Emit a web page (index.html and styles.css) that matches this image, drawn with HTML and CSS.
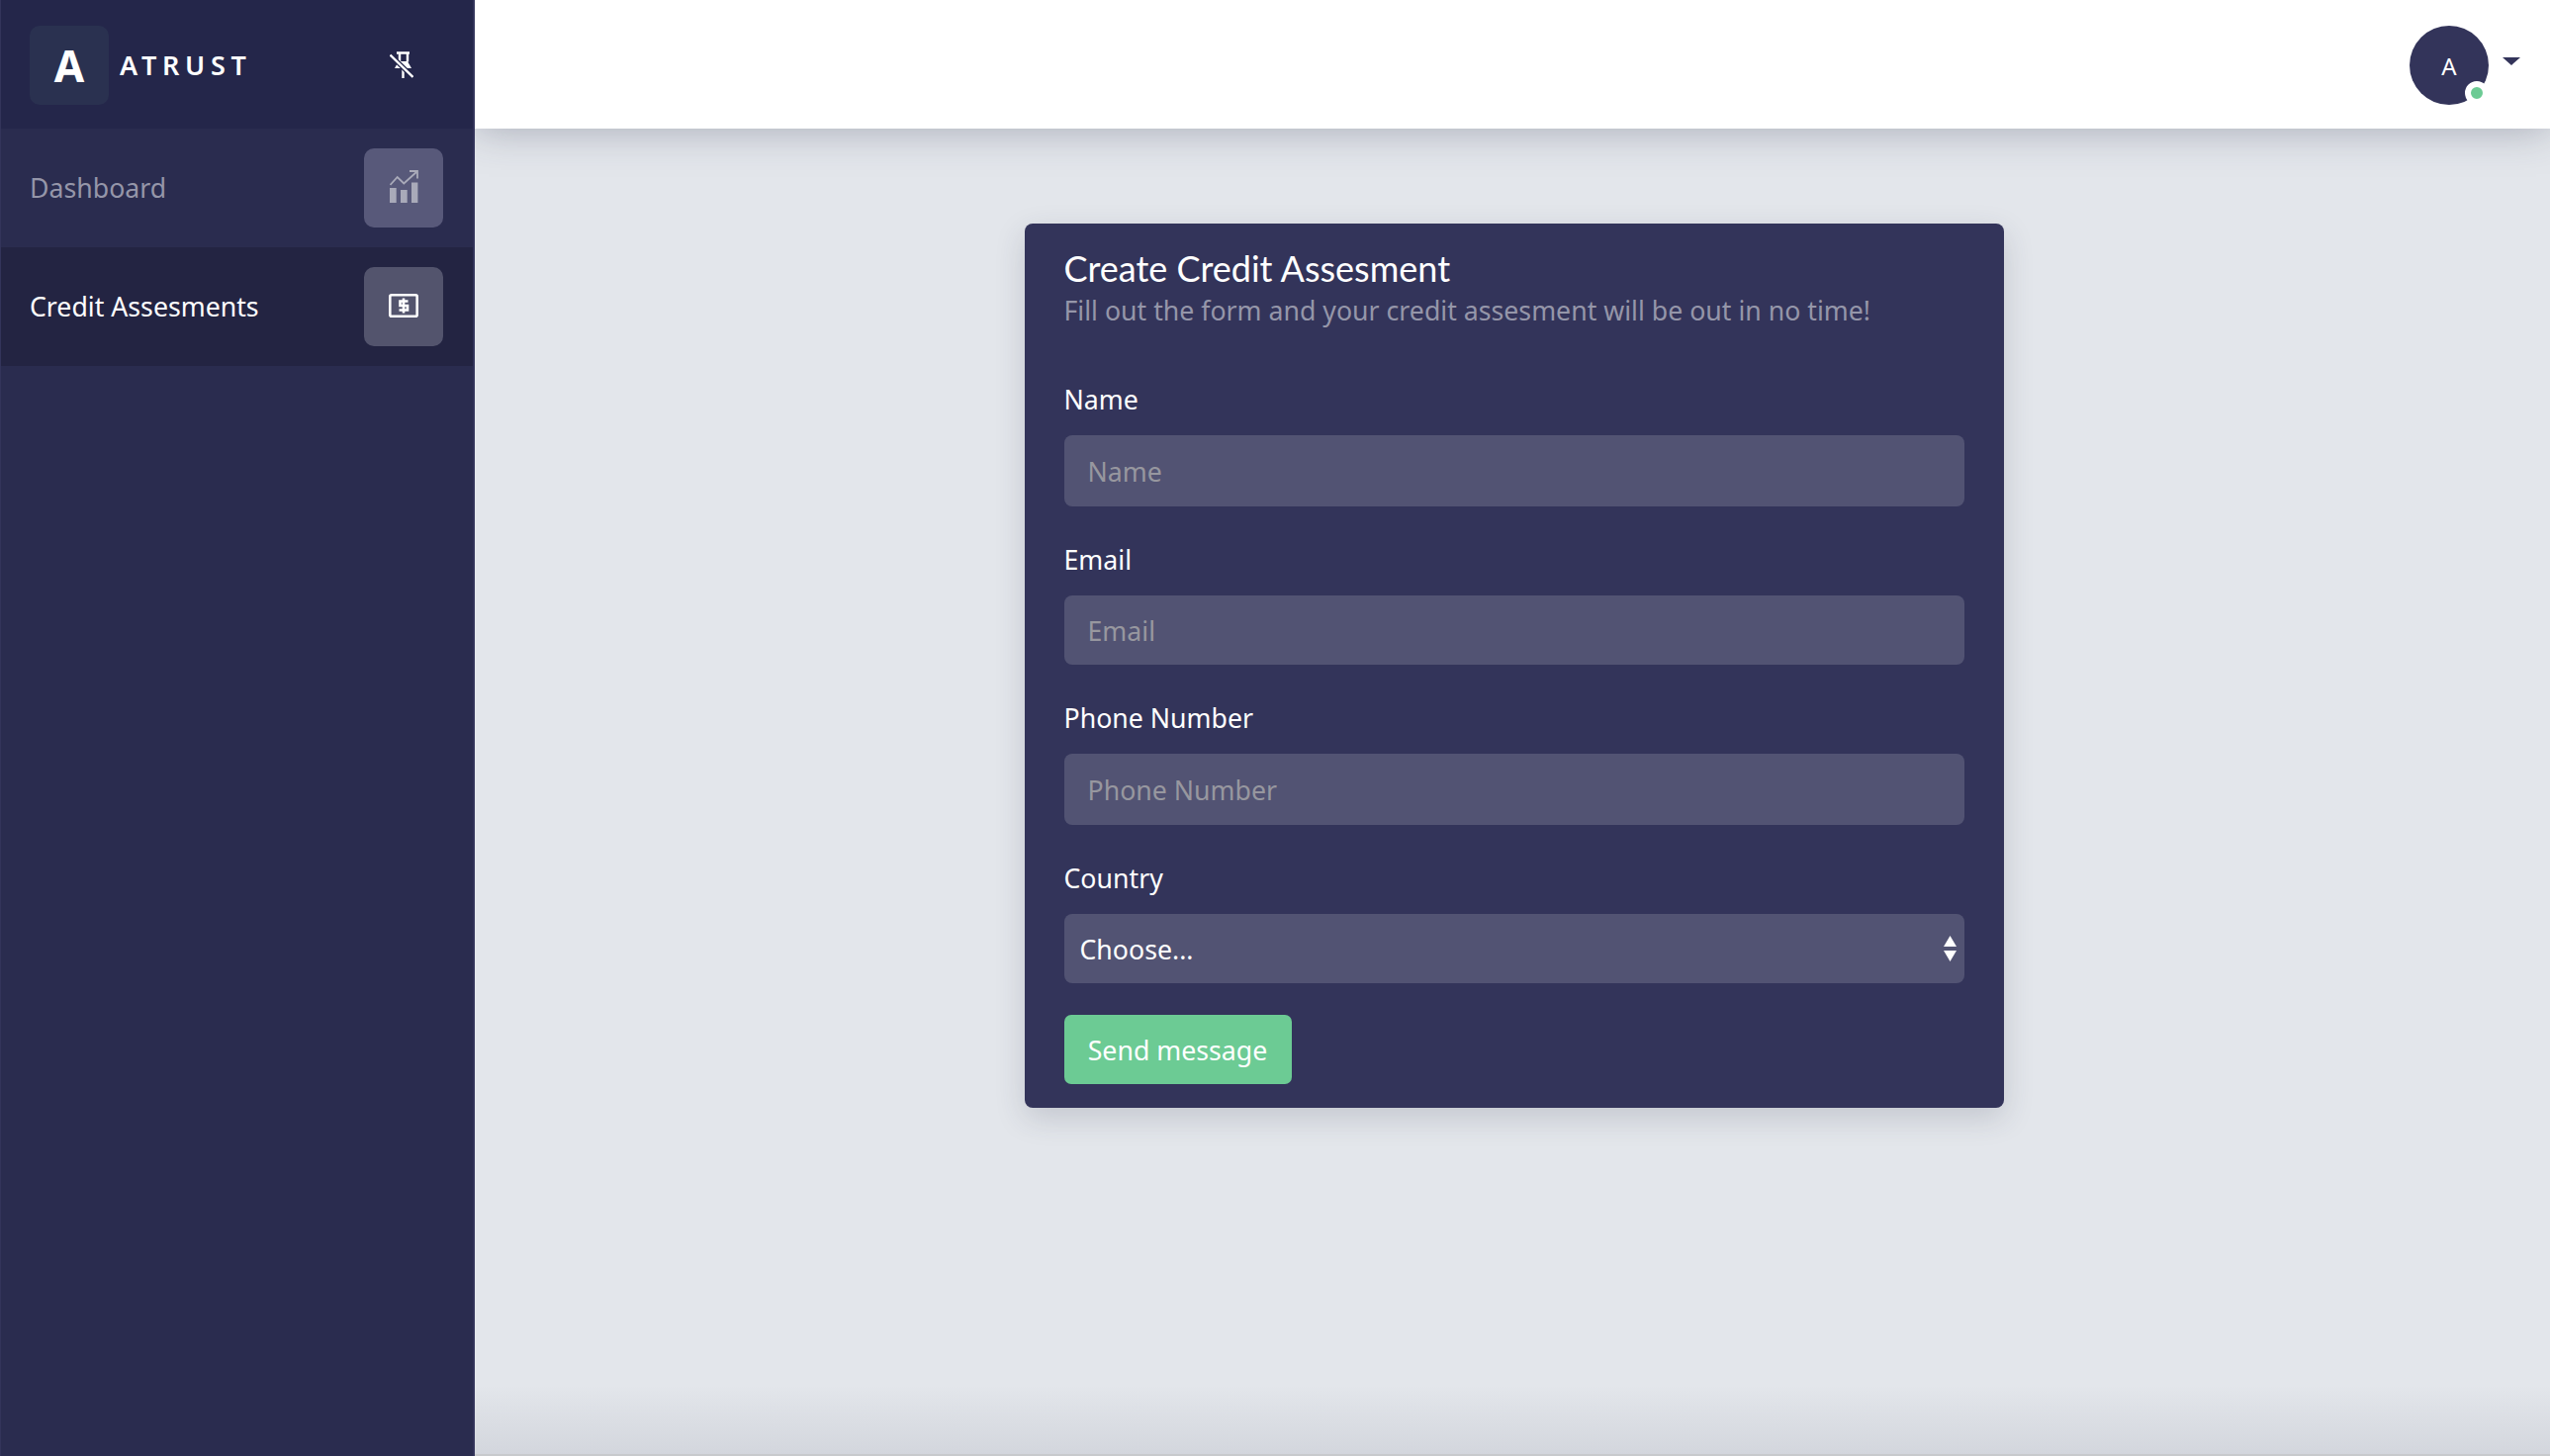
FILE: index.html
```html
<!DOCTYPE html>
<html lang="en">
<head>
<meta charset="utf-8">
<title>Atrust</title>
<link rel="stylesheet" href="styles.css">
</head>
<body>
<aside class="sidebar">
  <div class="brand">
    <div class="logo">A</div>
    <span class="brand-name">ATRUST</span>
    <svg class="pin" viewBox="0 0 24 30" width="24" height="30" aria-hidden="true">
      <path d="M7 3.500h13M10 3.500v9M18 3.500v9" fill="none" stroke="#fff" stroke-width="2.400"/>
      <path d="M13.500 19v10" fill="none" stroke="#fff" stroke-width="2.400"/>
      <path d="M9 12h9l4 7H5z" fill="#fff"/>
      <path d="M0.500 5.500l23 22.500" stroke="#24264a" stroke-width="5"/>
      <path d="M0.500 5.500l23 22.500" stroke="#fff" stroke-width="2.400"/>
    </svg>
  </div>
  <nav class="nav">
    <a class="nav-item">
      <span>Dashboard</span>
      <span class="nav-icon">
        <svg class="icon-raised" viewBox="0 0 29 33" width="29" height="33" aria-hidden="true">
          <path d="M0.500 15L7.700 7l6.600 6.500L27.500 1.500" fill="none" stroke="currentColor" stroke-width="1.800"/>
          <path d="M20 1h8v7.500" fill="none" stroke="currentColor" stroke-width="1.800"/>
          <path d="M0 18h6.700v15H0zM11 20h6.700v13H11zM22 12.500h6.400V33H22z" fill="currentColor"/>
        </svg>
      </span>
    </a>
    <a class="nav-item active">
      <span>Credit Assesments</span>
      <span class="nav-icon">
        <svg class="icon-raised" viewBox="0 0 30 24" width="30" height="24" aria-hidden="true">
          <rect x="1.300" y="1.300" width="27.400" height="21.400" rx="1.500" fill="none" stroke="currentColor" stroke-width="2.600"/>
          <path d="M19.500 7.500h-8V12h7.500v4.500h-8.500M15 4.500v15" fill="none" stroke="currentColor" stroke-width="2.600"/>
        </svg>
      </span>
    </a>
  </nav>
</aside>
<div class="main">
  <header class="topbar">
    <div class="avatar">A<span class="status"></span></div>
    <span class="caret"></span>
  </header>
  <main class="content">
    <form class="card">
      <h1 class="card-title">Create Credit Assesment</h1>
      <p class="card-sub">Fill out the form and your credit assesment will be out in no time!</p>
      <div class="field first">
        <label class="label" for="name">Name</label>
        <input class="control" id="name" placeholder="Name">
      </div>
      <div class="field">
        <label class="label" for="email">Email</label>
        <input class="control short" id="email" placeholder="Email">
      </div>
      <div class="field">
        <label class="label" for="phone">Phone Number</label>
        <input class="control" id="phone" placeholder="Phone Number">
      </div>
      <div class="field">
        <label class="label" for="country">Country</label>
        <div class="select-wrap">
          <select class="control short select" id="country"><option>Choose...</option></select>
          <svg class="select-arrows" viewBox="0 0 13 26" width="13" height="26" aria-hidden="true">
            <path d="M6.500 0L13 11H0zM0 15h13L6.500 26z" fill="#fff"/>
          </svg>
        </div>
      </div>
      <button class="send" type="button">Send message</button>
    </form>
  </main>
  <footer class="footer"></footer>
</div>
</body>
</html>
```

FILE: styles.css
```css
* { box-sizing: border-box; }
html, body { height: 100%; }
body {
  margin: 0;
  display: flex;
  height: 1472px;
  overflow: hidden;
  background: #e3e6eb;
  color: #fff;
  font-family: "Noto Sans", "Open Sans", sans-serif;
  font-size: 26.700px;
}
.sidebar {
  width: 480px;
  flex: none;
  background: #2a2c4f;
  border-left: 1px solid #33345a;
  border-right: 2px solid #33345a;
  position: relative;
  z-index: 1;
}
.brand {
  height: 130px;
  background: #24264a;
  display: flex;
  align-items: center;
  padding: 2px 29px 0;
}
.logo {
  width: 80px;
  height: 80px;
  border-radius: 10px;
  background: #2a3150;
  display: flex;
  align-items: center;
  justify-content: center;
  font-size: 44px;
  font-weight: 700;
  margin-right: 11px;
}
.brand-name {
  font-size: 27px;
  font-weight: 600;
  letter-spacing: 5.700px;
  margin-bottom: 2px;
}
.pin { margin-left: auto; margin-right: 31px; margin-bottom: 2px; }
.nav-item {
  height: 120px;
  display: flex;
  align-items: center;
  justify-content: space-between;
  padding: 0 30px 0 29px;
  color: #9596a9;
}
.nav-item > span:first-child { margin-top: -2px; }
.nav-item.active {
  background-color: #232442;
  color: #fff;
}
.nav-icon {
  width: 80px;
  height: 80px;
  border-radius: 10px;
  display: flex;
  align-items: center;
  justify-content: center;
  background: #58597a;
  color: #a9aab9;
}
.icon-raised { margin-bottom: 3px; }
.active .nav-icon { background: #53546d; color: #fff; }
.main {
  flex: 1;
  min-width: 0;
  display: flex;
  flex-direction: column;
}
.topbar {
  height: 130px;
  flex: none;
  background: #fff;
  display: flex;
  align-items: center;
  justify-content: flex-end;
  padding: 2px 30px 0 0;
  box-shadow: 0 0 40px rgba(50, 55, 80, .35);
  position: relative;
}
.avatar {
  width: 80px;
  height: 80px;
  border-radius: 50%;
  background: #33345a;
  position: relative;
  display: flex;
  align-items: center;
  justify-content: center;
  font-size: 24px;
}
.status {
  position: absolute;
  right: 0;
  bottom: 0;
  width: 24px;
  height: 24px;
  border-radius: 50%;
  background: #6ccb94;
  border: 6px solid #fff;
}
.caret {
  margin-left: 14px;
  margin-bottom: 8px;
  border-left: 9px solid transparent;
  border-right: 9px solid transparent;
  border-top: 8px solid #33345a;
}
.content {
  flex: 1;
  display: flex;
  justify-content: center;
  align-items: flex-start;
  padding-top: 96px;
}
.card {
  width: 990px;
  padding: 21px 40px 24px;
  margin-left: 3px;
  background: #33345a;
  border-radius: 8px;
  box-shadow: 0 10px 30px rgba(50, 55, 80, .18);
}
.card-title {
  margin: 0;
  font-family: "Lato", sans-serif;
  font-size: 36px;
  line-height: 48px;
  font-weight: 400;
}
.card-sub {
  margin: 0;
  color: #9596a9;
  line-height: 38px;
}
.field { margin-top: 35px; }
.field.first { margin-top: 52px; }
.label {
  display: block;
  line-height: 38px;
  margin-bottom: 17px;
}
.control {
  display: block;
  width: 100%;
  height: 72px;
  border: 0;
  border-radius: 8px;
  background: #525373;
  padding: 0 24px;
  font: inherit;
  color: #fff;
  outline: 0;
}
.control.short { height: 70px; }
.control::placeholder { color: #97979f; opacity: 1; }
.select-wrap { position: relative; }
.select { appearance: none; padding: 0 16px; }
.select-arrows {
  position: absolute;
  right: 8px;
  top: 22px;
}
.send {
  display: block;
  margin-top: 32px;
  width: 230px;
  height: 70px;
  border: 0;
  border-radius: 7px;
  background: #6ccb94;
  color: #fff;
  font: inherit;
}
.footer {
  height: 72px;
  flex: none;
  background: linear-gradient(rgba(50, 55, 80, 0), rgba(50, 55, 80, .09));
  border-bottom: 2px solid #c8cacd;
}
```
